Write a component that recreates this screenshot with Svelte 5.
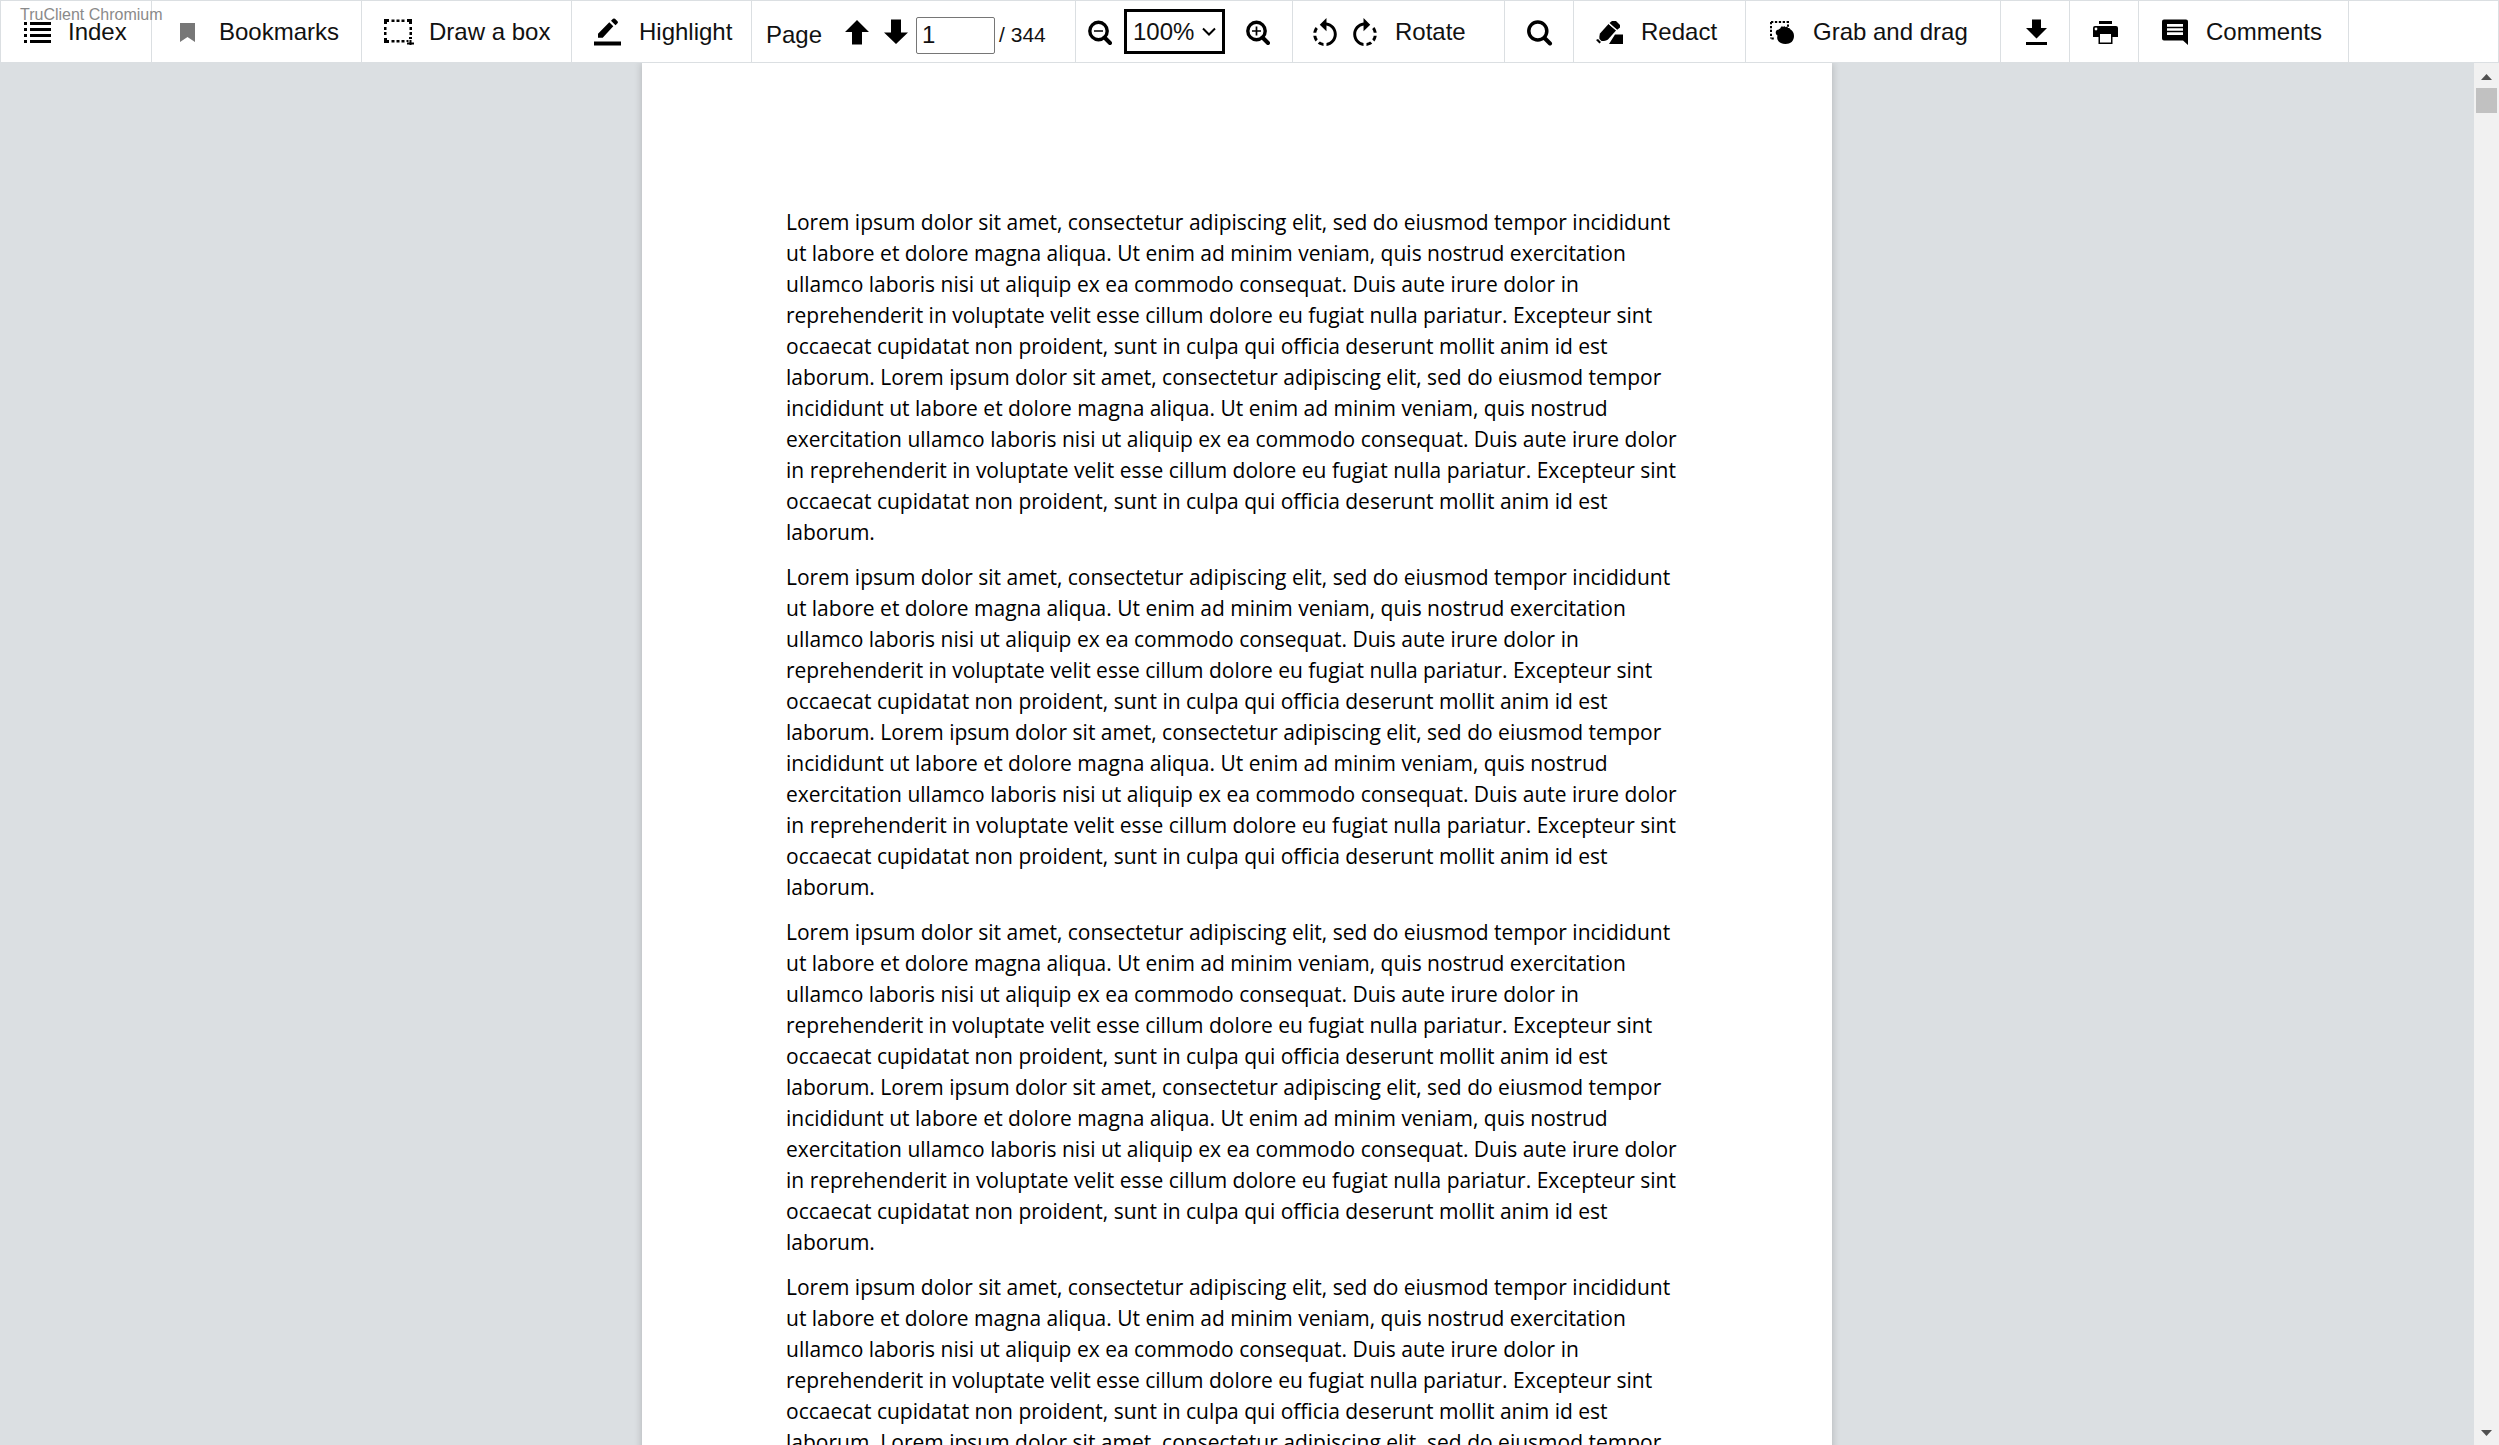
<script>
  const sentence =
    'Lorem ipsum dolor sit amet, consectetur adipiscing elit, sed do eiusmod tempor incididunt ut labore et dolore magna aliqua. Ut enim ad minim veniam, quis nostrud exercitation ullamco laboris nisi ut aliquip ex ea commodo consequat. Duis aute irure dolor in reprehenderit in voluptate velit esse cillum dolore eu fugiat nulla pariatur. Excepteur sint occaecat cupidatat non proident, sunt in culpa qui officia deserunt mollit anim id est laborum.';
  const paragraphs = Array(4).fill(`${sentence} ${sentence}`);
  const dots = [8, 13, 18];
  let page = $state('1');
  let zoom = $state('100%');
</script>

<div class="viewer">
  <span class="watermark">TruClient Chromium</span>
  <header class="toolbar">
    <button class="item narrow">
      <svg width="28" height="28" viewBox="0 0 28 28" aria-hidden="true">
        {#each [4, 10, 16, 22] as y}
          <rect x="1" {y} width="3" height="3" />
          <rect x="7" {y} width="21" height="3" />
        {/each}
      </svg>
      Index
    </button>
    <button class="item wide">
      <svg width="28" height="28" viewBox="0 0 28 28" aria-hidden="true">
        <path d="M6 5h15v19l-7.500-5L6 24z" fill="#777" />
      </svg>
      Bookmarks
    </button>
    <button class="item wide">
      <svg class="spill" width="28" height="28" viewBox="0 0 28 28" aria-hidden="true">
        <path d="M0 1h5v3H3v2H0zM23 1h5v5h-3V4h-2zM0 20h3v2h2v3H0z" />
        {#each dots as d}
          <rect x={d - 0.5} y="1.500" width="3" height="2.500" />
          <rect x={d - 0.5} y="22" width="3" height="2.500" />
        {/each}
        {#each [9, 14] as y}
          <rect x="0" {y} width="2.500" height="3" />
          <rect x="25.500" {y} width="2.500" height="3" />
        {/each}
        <path d="M25 19h3v2h-3zM22.500 22h2v2h-2zM25.500 22h2v2.500h2.500v2h-2.500V27h-2v-.5H23v-2h2.500z" />
      </svg>
      Draw a box
    </button>
    <button class="item medium">
      <svg width="28" height="28" viewBox="0 0 28 28" aria-hidden="true">
        <path d="M0 23.500h27v4H0zM4 15.700 15.300 4.300l4 4L8.700 19.700H4zM17 2.700 19 .8q1-.8 2 0l2.500 2.500q1 1 0 2L21.500 7.200z" />
      </svg>
      Highlight
    </button>

    <div class="item pager">
      <label for="page">Page</label>
      <button class="bare arrow up" aria-label="Previous page">
        <svg width="24" height="28" viewBox="0 0 24 28" aria-hidden="true"><path d="M12 2 24 14h-7v12.500H7V14H0z" /></svg>
      </button>
      <button class="bare arrow" aria-label="Next page">
        <svg width="24" height="28" viewBox="0 0 24 28" aria-hidden="true"><path d="M12 26 24 14.500h-7V1.500H7v13H0z" /></svg>
      </button>
      <input id="page" type="text" bind:value={page} />
      <span class="total">/ 344</span>
    </div>

    <div class="item zoomer">
      <button class="bare" aria-label="Zoom out">
        <svg width="24" height="28" viewBox="0 0 24 28" aria-hidden="true">
          <circle cx="10.500" cy="13" r="8.700" fill="none" stroke="#000" stroke-width="3.400" />
          <path d="M16.500 19.500 22 25" stroke="#000" stroke-width="4" stroke-linecap="round" />
          <path d="M6 13h9" stroke="#000" stroke-width="1.500" />
        </svg>
      </button>
      <span class="select">
        <select bind:value={zoom} aria-label="Zoom level">
          <option>50%</option>
          <option>100%</option>
          <option>150%</option>
        </select>
        <svg class="chevron" width="14" height="10" viewBox="0 0 14 10" aria-hidden="true">
          <path d="m1 1.500 6 6 6-6" fill="none" stroke="#000" stroke-width="2" />
        </svg>
      </span>
      <button class="bare plus" aria-label="Zoom in">
        <svg width="24" height="28" viewBox="0 0 24 28" aria-hidden="true">
          <circle cx="10.500" cy="13" r="8.700" fill="none" stroke="#000" stroke-width="3.400" />
          <path d="M16.500 19.500 22 25" stroke="#000" stroke-width="4" stroke-linecap="round" />
          <path d="M6 13h9M10.500 8.500v9" stroke="#000" stroke-width="1.700" />
        </svg>
      </button>
    </div>

    <div class="item rotate">
      <button class="bare" aria-label="Rotate left">
        <svg width="24" height="28" viewBox="4 1 16 19" aria-hidden="true">
          <path d="M7.110 8.530L5.700 7.110C4.800 8.270 4.240 9.610 4.070 11h2.020c.14-.87.49-1.720 1.020-2.470zM6.090 13H4.070c.17 1.390.72 2.730 1.620 3.890l1.410-1.420c-.52-.75-.87-1.590-1.010-2.470zm1.010 5.320c1.160.9 2.510 1.440 3.900 1.610V17.900c-.87-.15-1.710-.49-2.460-1.030L7.100 18.320zM13 4.070V1L8.450 5.550 13 10V6.090c2.840.48 5 2.940 5 5.910s-2.160 5.430-5 5.910v2.020c3.950-.49 7-3.850 7-7.930s-3.050-7.440-7-7.930z" />
        </svg>
      </button>
      <button class="bare" aria-label="Rotate right">
        <svg width="24" height="28" viewBox="4 1 16 19" aria-hidden="true">
          <path d="M15.550 5.550L11 1v3.070C7.060 4.560 4 7.920 4 12s3.050 7.440 7 7.930v-2.020c-2.840-.48-5-2.940-5-5.910s2.160-5.430 5-5.910V10l4.550-4.450zM19.930 11c-.17-1.390-.72-2.730-1.620-3.890l-1.420 1.420c.54.75.88 1.600 1.020 2.470h2.020zM13 17.900v2.020c1.390-.17 2.740-.71 3.900-1.610l-1.440-1.440c-.75.54-1.590.89-2.460 1.030zm3.890-2.420l1.420 1.410c.9-1.160 1.450-2.500 1.620-3.890h-2.020c-.14.87-.48 1.720-1.020 2.480z" />
        </svg>
      </button>
      <span>Rotate</span>
    </div>

    <button class="item icon-only" aria-label="Search">
      <svg width="28" height="28" viewBox="0 0 28 28" aria-hidden="true">
        <circle cx="10.800" cy="13" r="9" fill="none" stroke="#000" stroke-width="3.500" />
        <path d="m17.500 20 5.500 5.500" stroke="#000" stroke-width="4" stroke-linecap="round" />
      </svg>
    </button>
    <button class="item redact">
      <svg width="28" height="28" viewBox="0 0 28 28" aria-hidden="true">
        <path d="M4 15.500c-1 3-.5 5.500-.5 5.500l2 2s4 .5 6.500-1.500L20 12.500 12.500 6z" />
        <path d="m13.500 5 2.500-2h4L24 7v2.500l-2.800 2.300zM0 22l2-1 3 3-1.500 1.500zM13 26l6-9.500h8V26z" />
        <path d="m12.700 5.500 7.800 6.800" stroke="#fff" stroke-width="1" />
      </svg>
      Redact
    </button>
    <button class="item grab">
      <svg width="28" height="28" viewBox="0 0 28 28" aria-hidden="true">
        <path d="M3.500 20.500H7M3 4h17v5M3 4v16.500" fill="none" stroke="#000" stroke-width="2" stroke-dasharray="2.300 1.600" />
        <path d="M9 12c2-1 3-.5 4-3 .6-1 1.500-1 2 0 1-1.200 2-.8 2.500.2 1-.8 2-.4 2.600.8 1-.3 2 .3 2.400 1.500 2 1 3.500 3.500 3.500 6.500 0 5-3.500 8-8.500 8-4 0-7-1.500-8-4.500-.5-1.800-.3-3 0-4-2-1-2.500-4-.5-5.500z" />
      </svg>
      Grab and drag
    </button>
    <button class="item icon-only" aria-label="Download">
      <svg width="28" height="28" viewBox="0 0 28 28" aria-hidden="true">
        <path d="M9 1.500h9v8.500h6L13.500 20.500 3 10h6zM3 24h21v3H3z" />
      </svg>
    </button>
    <button class="item icon-only" aria-label="Print">
      <svg width="28" height="28" viewBox="0 0 28 28" aria-hidden="true">
        <path d="M7 3h13v3H7zM3 8h21q2 0 2 2v9h-5.500v7h-14v-7H1v-9q0-2 2-2z" />
        <path d="M8 16h11v8.500H8z" fill="#fff" />
        <circle cx="4" cy="11" r="1.400" fill="#fff" />
      </svg>
    </button>
    <button class="item wide">
      <svg width="28" height="28" viewBox="0 0 28 28" aria-hidden="true">
        <path d="M3 1.500h22q2 0 2 2V27l-5-4.500H3q-2 0-2-2v-17q0-2 2-2z" />
        <path d="M6 6h16v11H6z" fill="#fff" />
        <path d="M6 9.500h16M6 13.500h16" stroke="#000" stroke-width="1.300" />
      </svg>
      Comments
    </button>
  </header>

  <div class="workspace">
    <main class="canvas">
      <article class="sheet">
        {#each paragraphs as text}
          <p>{text}</p>
        {/each}
      </article>
    </main>
    <div class="scrollbar">
      <button class="bare step" aria-label="Scroll up">
        <svg width="11" height="6" viewBox="0 0 11 6" aria-hidden="true"><path d="M5.500 0 11 6H0z" /></svg>
      </button>
      <div class="thumb"></div>
      <button class="bare step last" aria-label="Scroll down">
        <svg width="11" height="6" viewBox="0 0 11 6" aria-hidden="true"><path d="M0 0h11L5.500 6z" /></svg>
      </button>
    </div>
  </div>
</div>

<style>
  :global(body) {
    margin: 0;
    background: #dbdfe2;
  }
  .viewer {
    position: relative;
    display: flex;
    flex-direction: column;
    height: 100vh;
    overflow: hidden;
    font-family: 'Liberation Sans', Arial, sans-serif;
    font-size: 24px;
    color: #111;
  }
  button,
  input,
  select {
    font: inherit;
    color: inherit;
  }
  svg {
    display: block;
    flex: none;
  }
  .spill {
    overflow: visible;
  }
  .watermark {
    position: absolute;
    z-index: 1;
    top: 6px;
    left: 20px;
    font-size: 16px;
    line-height: 18px;
    color: #8a8a8a;
    pointer-events: none;
  }
  .toolbar {
    display: flex;
    flex: none;
    height: 61px;
    border: 1px solid #dbdfe2;
    background: #fff;
  }
  .item {
    display: flex;
    align-items: center;
    gap: 17px;
    box-sizing: border-box;
    flex: none;
    padding: 0 0 0 22px;
    border: 0;
    border-right: 1px solid #dbdfe2;
    background: none;
    white-space: nowrap;
  }
  .bare {
    display: flex;
    padding: 0;
    border: 0;
    background: none;
  }
  .narrow {
    width: 151px;
  }
  .wide {
    width: 210px;
  }
  .medium {
    width: 180px;
  }
  .pager {
    width: 324px;
    gap: 0;
    padding: 7px 0 0 14px;
  }
  .arrow {
    padding-bottom: 7px;
    margin-right: 8px;
  }
  .arrow.up {
    margin: 0 15px 0 23px;
  }
  input {
    box-sizing: border-box;
    width: 79px;
    height: 37px;
    padding: 0 5px;
    border: 1px solid #767676;
    border-radius: 2px;
    background: #fff;
  }
  .total {
    margin-left: 4px;
    font-size: 21px;
  }
  .zoomer {
    width: 217px;
    gap: 0;
    padding-left: 12px;
  }
  .select {
    position: relative;
    margin: 0 21px 0 12px;
  }
  select {
    display: block;
    box-sizing: border-box;
    width: 101px;
    height: 45px;
    padding: 0 6px;
    border: 3px solid #000;
    border-radius: 0;
    background: #fff;
    appearance: none;
  }
  .chevron {
    position: absolute;
    right: 9px;
    top: 18px;
    pointer-events: none;
  }
  .rotate {
    width: 212px;
    padding-left: 20px;
    gap: 16px;
  }
  .rotate span {
    padding-left: 2px;
  }
  .icon-only {
    width: 69px;
  }
  .redact {
    width: 172px;
  }
  .grab {
    width: 255px;
  }
  .workspace {
    display: flex;
    flex: 1;
    min-height: 0;
  }
  .canvas {
    flex: 1;
    overflow: hidden;
    background: #dbdfe2;
  }
  .sheet {
    box-sizing: border-box;
    max-width: 1190px;
    margin: 0 auto;
    padding: 144px;
    background: #fff;
    box-shadow: 0 0 8px rgba(0, 0, 0, 0.2);
    font-family: 'Open Sans', sans-serif;
    font-size: 21px;
    line-height: 31px;
    color: #000;
  }
  p {
    margin: 0 0 14px;
  }
  .scrollbar {
    display: flex;
    flex-direction: column;
    flex: none;
    width: 25px;
    background: #f1f1f1;
  }
  .step {
    align-items: center;
    justify-content: center;
    height: 25px;
    padding-top: 2px;
    fill: #505050;
  }
  .step.last {
    margin-top: auto;
    padding: 0;
  }
  .thumb {
    height: 25px;
    margin: 0 2px;
    background: #c1c1c1;
  }
</style>
